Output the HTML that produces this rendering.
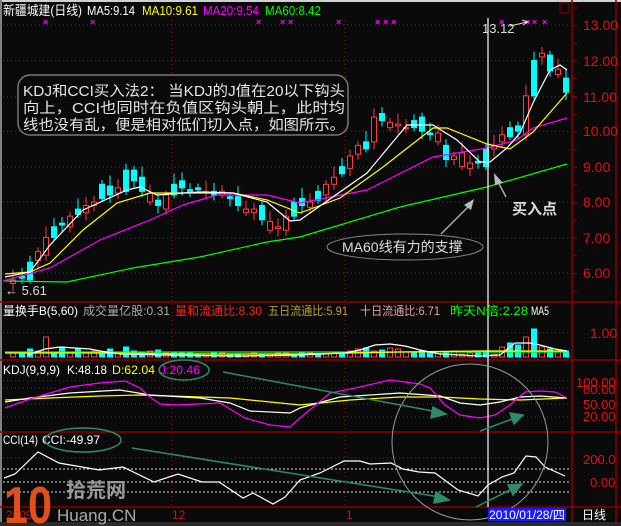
<!DOCTYPE html>
<html><head><meta charset="utf-8"><style>
html,body{margin:0;padding:0;background:#0a0a0a;width:621px;height:526px;overflow:hidden}
svg{display:block}
text{font-family:"Liberation Sans","Noto Sans CJK SC",sans-serif}
</style></head><body>
<svg id="s" width="621" height="526" viewBox="0 0 621 526" xmlns="http://www.w3.org/2000/svg">
<rect width="621" height="526" fill="#0a0a0a"/>
<rect x="0" y="0" width="621" height="2" fill="#d0d0d0"/>
<rect x="0" y="0" width="2" height="526" fill="#808080"/>
<g id="grid" stroke="#8b1a1a" stroke-dasharray="1,3" stroke-width="1">
<line x1="3" y1="25" x2="571" y2="25"/><line x1="3" y1="61" x2="571" y2="61"/><line x1="3" y1="97" x2="571" y2="97"/>
<line x1="3" y1="131" x2="571" y2="131"/><line x1="3" y1="167" x2="571" y2="167"/><line x1="3" y1="202" x2="571" y2="202"/>
<line x1="3" y1="238" x2="571" y2="238"/><line x1="3" y1="273" x2="571" y2="273"/>
<line x1="172" y1="20" x2="172" y2="507"/><line x1="345" y1="20" x2="345" y2="507"/>
<line x1="3" y1="333" x2="571" y2="333"/>
<line x1="3" y1="381" x2="571" y2="381"/><line x1="3" y1="388" x2="571" y2="388"/><line x1="3" y1="417" x2="571" y2="417"/>
<line x1="3" y1="458" x2="571" y2="458"/>
</g>
<g stroke="#ddd" stroke-dasharray="2,2" stroke-width="1">
<line x1="3" y1="404" x2="571" y2="404" stroke="#8b1a1a" stroke-dasharray="1,3"/>
<line x1="3" y1="469" x2="571" y2="469"/><line x1="3" y1="482" x2="571" y2="482"/><line x1="3" y1="492" x2="571" y2="492"/>
</g>
<g stroke="#8b0000" stroke-width="1.5">
<line x1="0" y1="302" x2="621" y2="302"/><line x1="0" y1="360" x2="621" y2="360"/>
<line x1="0" y1="432" x2="621" y2="432"/><line x1="0" y1="507" x2="621" y2="507"/>
<line x1="572" y1="0" x2="572" y2="522"/><line x1="616" y1="0" x2="616" y2="522"/>
</g>
<rect x="560" y="3" width="9" height="10" fill="none" stroke="#8b0000"/>
<g id="ticks" stroke="#8b0000"></g>
<g fill="#e01010" font-size="14">
<text x="583" y="30">13.00</text><text x="583" y="66">12.00</text><text x="583" y="102">11.00</text>
<text x="583" y="136">10.00</text><text x="583" y="172">9.00</text><text x="583" y="207">8.00</text>
<text x="583" y="243">7.00</text><text x="583" y="278">6.00</text>
<text x="590" y="338">1.00</text>
<text x="576" y="387" font-size="13">100.00</text><text x="583" y="394" font-size="13">80.00</text>
<text x="583" y="409" font-size="13">50.00</text><text x="583" y="421" font-size="13">20.00</text>
<text x="583" y="464" font-size="13">200.0</text><text x="590" y="487" font-size="13">0.00</text>
</g>
<g id="candles"></g>
<g id="vols"></g>
<g fill="none" stroke-width="1.2">
<polyline stroke="#00ff00" points="5,281 67,282 133,268 200,257 267,242 300,237 400,207 487,187 567,164"/>
<polyline stroke="#ff00ff" points="3,281 50,268 100,240 150,220 183,205 217,195 267,195 300,203 367,190 433,157 487,148 517,140 533,128 567,118"/>
<polyline stroke="#ffff00" points="5,274 30,272 50,263 83,230 117,203 150,193 233,193 267,200 300,213 340,198 383,167 433,128 447,128 487,144 510,149 533,132 567,93"/>
<polyline stroke="#ffffff" points="5,277 30,272 50,245 83,210 127,190 140,187 157,195 183,193 200,192 233,193 267,202 290,221 300,220 367,173 407,125 433,125 457,140 480,162 490,162 507,148 520,133 533,103 550,70 560,65 567,70"/>
<polyline stroke="#00ff00" points="5,352 567,352"/>
<polyline stroke="#ffff00" points="5,353 100,353 200,354 300,354 400,352 480,351 567,351"/>
<polyline stroke="#ffffff" points="28,355 45,349 60,347 75,348 90,349 100,351 120,354 160,355 240,356 300,355 345,353 360,350 375,345 390,344 405,346 420,350 440,354 480,356 500,355 515,343 530,343 540,345 555,349 567,351"/>
<polyline stroke="#ffff00" points="5,400 50,398 100,396 140,395 230,398 300,405 350,400 400,397 440,397 480,399 520,400 567,398"/>
<polyline stroke="#ffffff" points="5,402 30,398 70,393 120,390 150,395 200,398 230,403 250,411 290,413 300,408 340,397 400,393 440,396 460,403 480,405 500,402 520,397 540,396 567,398"/>
<polyline stroke="#ff00ff" points="5,408 30,399 70,387 100,383 125,381 140,388 150,397 160,404 175,405 220,403 230,409 245,418 270,425 290,427 300,418 330,393 360,387 390,380 420,384 430,388 445,405 460,415 480,418 495,415 510,405 525,392 540,391 555,392 567,398"/>
<polyline stroke="#ffffff" points="4,478 15,474 38,452 59,463 99,470 123,467 154,482 178,474 202,482 219,482 243,498 253,493 273,504 285,497 300,480 320,473 344,461 360,461 370,464 391,463 403,469 419,472 435,473 458,490 478,496 488,485 502,477 514,473 526,456 536,457 545,467 565,476"/>
</g>
<line x1="488" y1="18" x2="488" y2="507" stroke="#fff" stroke-width="1.2"/>
<g font-size="13" lengthAdjust="spacingAndGlyphs">
<text x="3" y="15" fill="#fff" textLength="79" lengthAdjust="spacingAndGlyphs">新疆城建(日线)</text>
<text x="87" y="15" fill="#fff" textLength="48" lengthAdjust="spacingAndGlyphs">MA5:9.14</text>
<text x="142" y="15" fill="#ffff00" textLength="56" lengthAdjust="spacingAndGlyphs">MA10:9.61</text>
<text x="203" y="15" fill="#ff00ff" textLength="56" lengthAdjust="spacingAndGlyphs">MA20:9.54</text>
<text x="265" y="15" fill="#00ff00" textLength="56" lengthAdjust="spacingAndGlyphs">MA60:8.42</text>
</g>
<g fill="#ff00ff" font-size="9" font-weight="bold" id="marks"></g>
<text x="482" y="33" font-size="13" fill="#ddd">13.12</text>
<path d="M510,26 L527,22 M522,20 L528,22 L523,25" stroke="#ddd" fill="none"/>
<text x="5" y="295" font-size="13" fill="#ddd">← 5.61</text>
<rect x="18" y="75" width="330" height="60" rx="12" fill="#0a0a0a" stroke="#777" stroke-width="1.5"/>
<g fill="#e6e6e6" font-size="14.5">
<text x="23" y="96" textLength="322" lengthAdjust="spacingAndGlyphs">KDJ和CCI买入法2：  当KDJ的J值在20以下钩头</text>
<text x="23" y="113" textLength="322" lengthAdjust="spacingAndGlyphs">向上，CCI也同时在负值区钩头朝上，此时均</text>
<text x="23" y="130" textLength="322" lengthAdjust="spacingAndGlyphs">线也没有乱，便是相对低们切入点，如图所示。</text>
</g>
<text x="512" y="214" font-size="15" font-weight="bold" fill="#ddd">买入点</text>
<path d="M506,197 L497,180" stroke="#aaa" stroke-width="1.5"/><path d="M494,173 L503,183 L495,185 Z" fill="#bbb"/>
<ellipse cx="405" cy="247" rx="78" ry="13" fill="#0a0a0a" stroke="#888"/>
<text x="342" y="252" font-size="14" fill="#ddd">MA60线有力的支撑</text>
<path d="M441,234 L470,205" stroke="#aaa" stroke-width="1.5"/><path d="M474,199 L471,210 L464,205 Z" fill="#bbb"/>
<g font-size="12">
<text x="3" y="315" fill="#fff" textLength="75" lengthAdjust="spacingAndGlyphs">量换手B(5,60)</text>
<text x="83" y="315" fill="#aaa" textLength="87" lengthAdjust="spacingAndGlyphs">成交量亿股:0.31</text>
<text x="175" y="315" fill="#ff2020" textLength="87" lengthAdjust="spacingAndGlyphs">量和流通比:8.30</text>
<text x="268" y="315" fill="#b0a040" textLength="80" lengthAdjust="spacingAndGlyphs">五日流通比:5.91</text>
<text x="360" y="315" fill="#e8a0a0" textLength="80" lengthAdjust="spacingAndGlyphs">十日流通比:6.71</text>
<text x="450" y="315" fill="#00ff00" textLength="78" lengthAdjust="spacingAndGlyphs">昨天N倍:2.28</text>
<text x="531" y="315" fill="#fff" textLength="18" lengthAdjust="spacingAndGlyphs">MA5</text>
<text x="3" y="374" fill="#fff" textLength="57" lengthAdjust="spacingAndGlyphs">KDJ(9,9,9)</text>
<text x="67" y="374" fill="#fff" textLength="40" lengthAdjust="spacingAndGlyphs">K:48.18</text>
<text x="112" y="374" fill="#ffff00" textLength="43" lengthAdjust="spacingAndGlyphs">D:62.04</text>
<text x="160" y="374" fill="#ff00ff" textLength="40" lengthAdjust="spacingAndGlyphs">J:20.46</text>
<text x="3" y="444" fill="#fff" textLength="35" lengthAdjust="spacingAndGlyphs">CCI(14)</text>
<text x="42" y="444" fill="#fff" textLength="58" lengthAdjust="spacingAndGlyphs">CCI:-49.97</text>
</g>
<ellipse cx="184" cy="370" rx="25" ry="10" fill="none" stroke="#2e8b6a" stroke-width="1.5"/>
<ellipse cx="83" cy="440" rx="38" ry="12" fill="none" stroke="#2e8b6a" stroke-width="1.5"/>
<circle cx="470" cy="442" r="78" fill="none" stroke="#999" stroke-width="1"/>
<g stroke="#2e8b6a" stroke-width="1.5" fill="#2e8b6a">
<line x1="223" y1="372" x2="438" y2="412"/><path d="M446,414 L433,407 L431,418 Z"/>
<line x1="480" y1="431" x2="515" y2="418"/><path d="M523,415 L510,413 L514,424 Z"/>
<line x1="132" y1="448" x2="440" y2="497"/><path d="M449,500 L436,492 L434,503 Z"/>
<line x1="476" y1="507" x2="514" y2="488"/><path d="M522,484 L508,485 L513,495 Z"/>
</g>
<g font-size="12">
<text x="6" y="519" fill="#d01010">2009</text>
<text x="172" y="519" fill="#d01010">12</text>
<text x="346" y="519" fill="#d01010">1</text>
<rect x="488" y="508" width="78" height="13" fill="#1a1aff"/>
<text x="489" y="519" fill="#fff" font-size="11.5" textLength="76" lengthAdjust="spacingAndGlyphs">2010/01/28/四</text>
<text x="582" y="519" fill="#fff">日线</text>
</g>
<rect x="0" y="522" width="621" height="4" fill="#2a2a2a"/>
<text x="4" y="523" font-size="52" font-weight="bold" fill="#e0501a" textLength="48" lengthAdjust="spacingAndGlyphs">10</text>
<text x="66" y="497" font-size="20" font-weight="bold" fill="#999">拾荒网</text>
<text x="57" y="521" font-size="17" fill="#aaa">Huang.CN</text>
</svg>
<script>
var NS="http://www.w3.org/2000/svg";
function el(p,t,a){var e=document.createElementNS(NS,t);for(var k in a)e.setAttribute(k,a[k]);p.appendChild(e);return e;}
var key=[[5,5.7],[13,5.8],[22,5.85],[30,6.3],[38,6.6],[46,7.0],[54,7.3],[62,7.35],[70,7.6],[78,7.8],[86,7.9],[94,8.0],[102,8.5],[110,8.2],[118,8.4],[126,8.9],[134,8.6],[142,8.3],[150,8.0],[158,7.9],[166,8.2],[174,8.5],[182,8.4],[190,8.3],[198,8.4],[206,8.3],[214,8.2],[222,8.2],[230,8.1],[238,7.9],[246,7.7],[254,7.8],[262,7.5],[270,7.2],[278,7.3],[286,7.6],[294,8.0],[302,7.9],[310,8.0],[318,8.3],[326,8.5],[334,8.7],[342,9.0],[350,9.3],[358,9.6],[366,9.7],[374,10.4],[382,10.3],[390,10.1],[398,10.2],[406,10.1],[414,10.3],[422,10.0],[430,9.9],[438,9.7],[446,9.2],[454,9.3],[462,9.0],[470,9.1],[478,9.1],[486,9.5],[494,9.6],[502,9.9],[510,10.1],[518,10.0],[526,11.0],[534,12.0],[542,12.2],[550,11.7],[558,11.6],[566,11.1]];
function Y(p){return 25+(13-p)*35.4;}
var cg=document.getElementById('candles'),vg=document.getElementById('vols');
var vh=[3,4,5,8,6,20,4,10,4,8,5,6,4,8,5,10,6,4,6,7,4,5,5,4,3,3,4,4,3,3,3,4,3,3,4,4,3,4,4,3,3,4,3,6,8,9,6,7,9,8,5,4,6,5,5,4,6,3,4,5,5,3,10,14,12,20,28,10,8,5,6];
for(var i=1;i<key.length;i++){
 var x=key[i][0],c=key[i][1],o=key[i-1][1]+((i*7)%5-2)*0.05;
 if(i%3==0){var t=o;o=c;c=t;}
 var up=c>=o,hi=Math.max(o,c)+0.12+((i*3)%4)*0.06,lo=Math.min(o,c)-0.1-((i*5)%3)*0.06;
 var col=up?"#ff3c3c":"#00ffff";
 el(cg,'line',{x1:x,x2:x,y1:Y(hi),y2:Y(lo),stroke:col});
 var yt=Y(Math.max(o,c)),h=Math.max(1,Y(Math.min(o,c))-yt);
 el(cg,'rect',{x:x-2.5,y:yt,width:5,height:h,fill:up?"#0a0a0a":col,stroke:col,'stroke-width':1});
 var v=vh[i%vh.length];
 el(vg,'rect',{x:x-2.5,y:357-v,width:5,height:v,fill:up?"#0a0a0a":"#00ffff",stroke:up?"#ff3c3c":"#00ffff",'stroke-width':1});
}
var mk=document.getElementById('marks');
[46,93,259,283,291,339,378,386,394,502,528,535,545].forEach(function(x){el(mk,'text',{x:x-3,y:25}).textContent="×";});
var tk=document.getElementById('ticks');
for(var y=8;y<300;y+=17.7)el(tk,'line',{x1:572,x2:577,y1:y,y2:y});
</script>
</body></html>
